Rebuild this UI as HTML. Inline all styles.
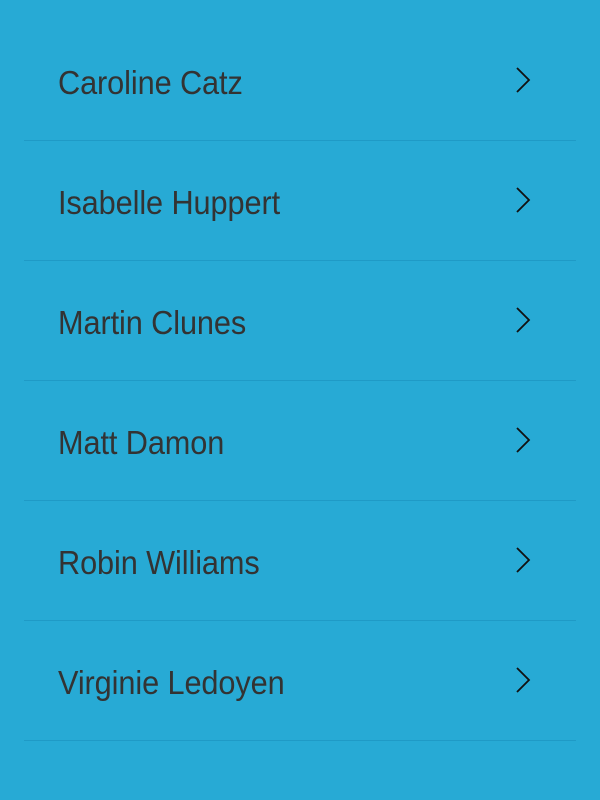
<!DOCTYPE html>
<html><head><style>
body{margin:0;width:600px;height:800px;background:#27aad5;overflow:hidden;font-family:"Liberation Sans",sans-serif;}
.row{position:absolute;left:24px;width:552px;height:120px;border-bottom:1.5px solid #1f9ac6;box-sizing:border-box;}
.t{position:absolute;left:34px;top:42px;font-size:33px;color:#333;letter-spacing:-0.1px;line-height:40px;transform:scaleX(0.93);transform-origin:left;white-space:nowrap;}
svg{position:absolute;left:491px;top:45px;}
</style></head><body>
<div class="row" style="top:21px"><div class="t">Caroline Catz</div><svg width="20" height="30"><path d="M2 2 L14 14 L2 26" fill="none" stroke="#111" stroke-width="1.8"/></svg></div>
<div class="row" style="top:141px"><div class="t">Isabelle Huppert</div><svg width="20" height="30"><path d="M2 2 L14 14 L2 26" fill="none" stroke="#111" stroke-width="1.8"/></svg></div>
<div class="row" style="top:261px"><div class="t">Martin Clunes</div><svg width="20" height="30"><path d="M2 2 L14 14 L2 26" fill="none" stroke="#111" stroke-width="1.8"/></svg></div>
<div class="row" style="top:381px"><div class="t">Matt Damon</div><svg width="20" height="30"><path d="M2 2 L14 14 L2 26" fill="none" stroke="#111" stroke-width="1.8"/></svg></div>
<div class="row" style="top:501px"><div class="t">Robin Williams</div><svg width="20" height="30"><path d="M2 2 L14 14 L2 26" fill="none" stroke="#111" stroke-width="1.8"/></svg></div>
<div class="row" style="top:621px"><div class="t">Virginie Ledoyen</div><svg width="20" height="30"><path d="M2 2 L14 14 L2 26" fill="none" stroke="#111" stroke-width="1.8"/></svg></div>
</body></html>
